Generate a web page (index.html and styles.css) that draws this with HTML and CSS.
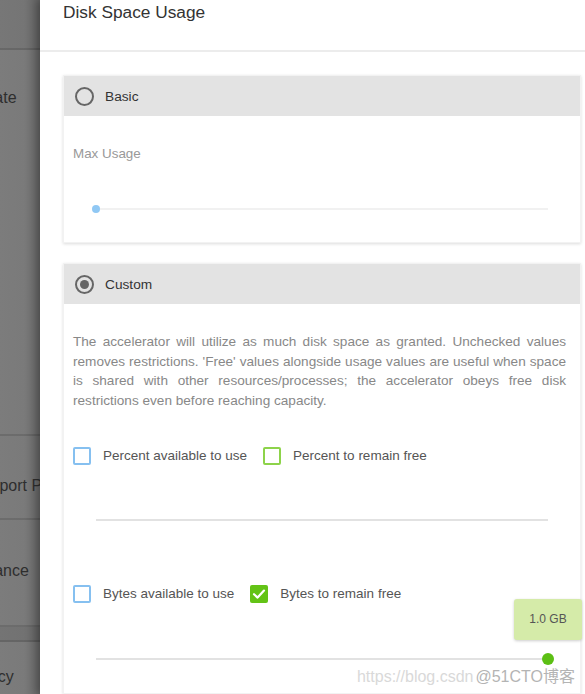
FILE: index.html
```html
<!DOCTYPE html>
<html>
<head>
<meta charset="utf-8">
<link rel="stylesheet" href="styles.css">
</head>
<body>
<div class="app">
  <nav class="side">
    <div class="side-item top"></div>
    <div class="side-item tall"><span class="t-update">Update</span></div>
    <div class="side-item mid"><span>Support Portal</span></div>
    <div class="side-item mid2"><span>Balance</span></div>
    <div class="side-item band"></div>
    <div class="side-item last"><span>Policy</span></div>
  </nav>
  <main class="drawer">
    <header class="title">Disk Space Usage</header>
    <div class="content">
      <section class="card basic">
        <div class="card-head"><span class="radio"></span><span>Basic</span></div>
        <div class="card-body basic-body">
          <div class="label">Max Usage</div>
          <div class="slider light"><span class="thumb blue"></span></div>
        </div>
      </section>
      <section class="card custom">
        <div class="card-head"><span class="radio checked"></span><span>Custom</span></div>
        <div class="card-body custom-body">
          <p class="desc">The accelerator will utilize as much disk space as granted. Unchecked values removes restrictions. 'Free' values alongside usage values are useful when space is shared with other resources/processes; the accelerator obeys free disk restrictions even before reaching capacity.</p>
          <div class="checks row1">
            <label class="check"><span class="box blue-box"></span>Percent available to use</label>
            <label class="check"><span class="box green-box"></span>Percent to remain free</label>
          </div>
          <div class="slider plain"></div>
          <div class="checks row2">
            <label class="check"><span class="box blue-box"></span>Bytes available to use</label>
            <label class="check"><span class="box green-fill"><svg viewBox="0 0 18 18" width="18" height="18"><path d="M4 9.2 L7.6 12.6 L14 5.6" fill="none" stroke="#fff" stroke-width="2.2" stroke-linecap="round" stroke-linejoin="round"/></svg></span>Bytes to remain free</label>
          </div>
          <div class="slider plain last-slider">
            <span class="tip">1.0 GB</span>
            <span class="thumb green end"></span>
          </div>
          <div class="watermark"><span class="wm1">https://blog.csdn</span><span class="wm2">@51CTO博客</span></div>
        </div>
      </section>
    </div>
  </main>
</div>
</body>
</html>
```
FILE: styles.css
```css
* { box-sizing: border-box; }
html, body { margin: 0; padding: 0; }
body {
  font-family: "Liberation Sans", Arial, "Noto Sans CJK SC", sans-serif;
  background: #fff;
  width: 585px;
  height: 694px;
  overflow: hidden;
}
.app {
  display: flex;
  height: 694px;
}
.side {
  width: 40px;
  flex: none;
  overflow: hidden;
  background: linear-gradient(to right, #7c7c7c 0, #7a7a7a 60%, #6f6f6f 85%, #666 100%);
  display: flex;
  flex-direction: column;
  color: #2e2e2e;
  font-size: 16px;
}
.side-item {
  display: flex;
  align-items: flex-start;
  border-bottom: 2px solid rgba(0,0,0,0.12);
  white-space: nowrap;
  line-height: 18px;
}
.side-item span { margin-left: -29px; }
.side-item span.t-update { margin-left: -35px; }
.side-item.top { height: 50px; background: rgba(0,0,0,0.04); }
.side-item.tall { height: 386px; padding-top: 39px; }
.side-item.mid { height: 84px; padding-top: 41px; }
.side-item.mid2 { height: 107px; padding-top: 42px; }
.side-item.band { height: 15px; background: rgba(0,0,0,0.06); }
.side-item.last { flex: 1; border-bottom: none; padding-top: 26px; }

.drawer {
  flex: 1;
  background: #fff;
  box-shadow: -4px 0 8px rgba(0,0,0,0.25);
  position: relative;
  z-index: 1;
}
.title {
  height: 52px;
  border-bottom: 2px solid #ececec;
  padding: 0 0 0 23px;
  font-size: 17.3px;
  line-height: 24px;
  color: #333;
}
.content {
  padding: 23px 4px 0 23px;
}
.card {
  background: #fff;
  border: 1px solid #f2f2f2;
  box-shadow: 0 1px 3px rgba(0,0,0,0.14);
}
.card-head {
  height: 40px;
  background: #e3e3e3;
  display: flex;
  align-items: center;
  padding-left: 11px;
  font-size: 13.7px;
  color: #333;
  gap: 11px;
}
.radio {
  width: 19px;
  height: 19px;
  border: 2px solid #666;
  border-radius: 50%;
  display: flex;
  align-items: center;
  justify-content: center;
}
.radio.checked::after {
  content: "";
  width: 9px;
  height: 9px;
  border-radius: 50%;
  background: #666;
}
.card-body { position: relative; }
.basic-body {
  height: 126px;
  padding: 30px 0 0 9px;
}
.label {
  font-size: 13.4px;
  line-height: 16px;
  color: #999;
}
.slider {
  position: relative;
  height: 2px;
}
.slider.light { background: #f1f1f1; margin: 46px 32px 0 23px; }
.thumb {
  position: absolute;
  top: 50%;
  border-radius: 50%;
  transform: translate(-50%, -50%);
}
.thumb.blue { left: 0; width: 8px; height: 8px; background: #90c8f4; }
.thumb.green { left: 100%; width: 12px; height: 12px; background: #5cbf14; }

.custom { margin-top: 20px; }
.custom-body {
  height: 389px;
  padding: 28px 10px 0 9px;
}
.desc {
  margin: 0 4px 0 0;
  font-size: 13.6px;
  line-height: 19.7px;
  color: #888;
  text-align: justify;
}
.checks {
  display: flex;
  font-size: 13.5px;
  color: #555;
}
.row1 { margin-top: 35px; gap: 16px; }
.row2 { margin-top: 63px; gap: 16px; }
.check {
  display: flex;
  align-items: center;
  gap: 12px;
  line-height: 20px;
}
.box {
  width: 18px;
  height: 18px;
  border-radius: 2px;
  display: flex;
}
.blue-box { border: 2px solid #86c0f0; }
.green-box { border: 2px solid #8dd34a; }
.green-fill { background: #63c316; }

.slider.plain {
  background: #e2e2e2;
  margin: 53px 22px 0 23px;
}
.slider.plain.last-slider { margin-top: 54px; }
.tip {
  position: absolute;
  right: -34px;
  bottom: 20px;
  width: 68px;
  height: 41px;
  background: #d5eba9;
  border-radius: 3px;
  box-shadow: 0 1px 3px rgba(0,0,0,0.2);
  font-size: 12px;
  color: #555;
  display: flex;
  align-items: center;
  justify-content: center;
}
.watermark {
  position: absolute;
  right: 5px;
  bottom: 6px;
  font-size: 16px;
  white-space: nowrap;
}
.wm1 { color: #d9d9d9; }
.wm2 { color: #b4b4b4; margin-left: 2px; }
```
